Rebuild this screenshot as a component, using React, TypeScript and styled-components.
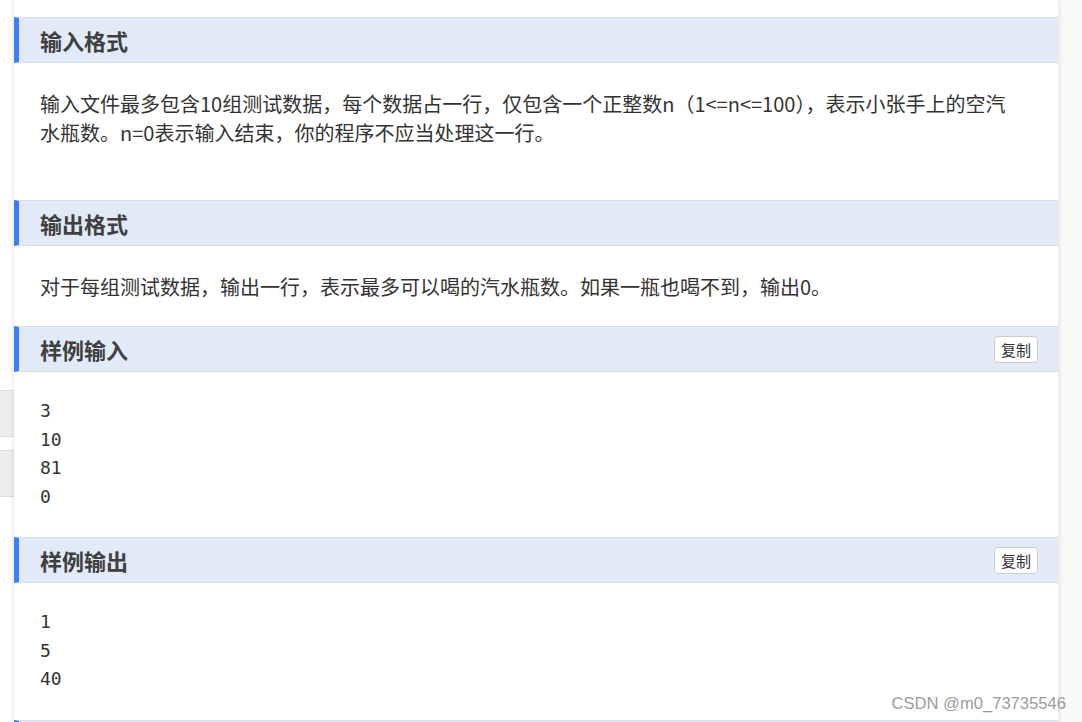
import React from "react";
import styled, { createGlobalStyle } from "styled-components";

const GlobalStyle = createGlobalStyle`
  html, body {
    margin: 0;
    padding: 0;
    background: #f8f8f8;
    font-family: "Noto Sans CJK SC", "Noto Sans", sans-serif;
    overflow: hidden;
  }
  * { box-sizing: border-box; }
`;

const Page = styled.div`
  display: flex;
  align-items: flex-start;
  width: 1082px;
  height: 722px;
  overflow: hidden;
  position: relative;
`;

const LeftRail = styled.div`
  width: 14px;
  flex: none;
  align-self: stretch;
  background: #ffffff;
  display: flex;
  flex-direction: column;
  gap: 13px;
  padding-top: 390px;
`;

const RailItem = styled.div`
  height: 47px;
  background: #eeeeee;
  border-top: 1px solid #dddddd;
  border-bottom: 1px solid #dddddd;
`;

const Card = styled.main`
  width: 1044px;
  flex: none;
  background: #ffffff;
  padding-top: 17px;
  box-shadow: 0 0 5px rgba(0, 0, 0, 0.14);
  position: relative;
  z-index: 1;
`;

const SectionHeader = styled.div`
  height: 46px;
  display: flex;
  align-items: center;
  justify-content: space-between;
  background: #e3eaf7;
  border-top: 1px solid #d9dde4;
  border-bottom: 1px solid #d9dde4;
  border-left: 5px solid #3d7cff;
  padding: 0 20px 0 21px;
`;

const Title = styled.h3`
  margin: 0;
  font-size: 22px;
  font-weight: 700;
  color: #404040;
  letter-spacing: 0;
`;

const CopyButton = styled.button`
  width: 44px;
  height: 27px;
  padding: 0;
  background: #ffffff;
  border: 1px solid #cccccc;
  border-radius: 4px;
  font-family: "Noto Sans CJK SC", sans-serif;
  font-size: 15px;
  color: #333333;
  line-height: 25px;
  cursor: pointer;
`;

const Body = styled.div<{ $extra?: boolean }>`
  padding: 26px 48px ${(p) => (p.$extra ? "53px" : "25px")} 26px;
  font-size: 20px;
  line-height: 29px;
  color: #333333;
`;

const Para = styled.p`
  margin: 0;
`;

const Sample = styled.pre`
  margin: 0;
  padding: 25px 26px 26px 26px;
  font-family: "DejaVu Sans Mono", "Liberation Mono", monospace;
  font-size: 18px;
  line-height: 28.5px;
  color: #333333;
`;

const Watermark = styled.div`
  position: absolute;
  right: 16px;
  bottom: 8px;
  z-index: 2;
  font-family: "Liberation Sans", Arial, sans-serif;
  font-size: 16.6px;
  color: #9c9c9c;
  pointer-events: none;
`;

type Section = {
  title: string;
  copy?: boolean;
  text?: string;
  extra?: boolean;
  sample?: string;
};

const sections: Section[] = [
  {
    title: "输入格式",
    text: "输入文件最多包含10组测试数据，每个数据占一行，仅包含一个正整数n（1<=n<=100），表示小张手上的空汽水瓶数。n=0表示输入结束，你的程序不应当处理这一行。",
    extra: true,
  },
  {
    title: "输出格式",
    text: "对于每组测试数据，输出一行，表示最多可以喝的汽水瓶数。如果一瓶也喝不到，输出0。",
  },
  { title: "样例输入", copy: true, sample: "3\n10\n81\n0" },
  { title: "样例输出", copy: true, sample: "1\n5\n40" },
];

export default function App() {
  return (
    <>
      <GlobalStyle />
      <Page>
        <LeftRail>
          <RailItem />
          <RailItem />
        </LeftRail>
        <Card>
          {sections.map((s) => (
            <section key={s.title}>
              <SectionHeader>
                <Title>{s.title}</Title>
                {s.copy && <CopyButton>复制</CopyButton>}
              </SectionHeader>
              {s.text !== undefined && (
                <Body $extra={s.extra}>
                  <Para>{s.text}</Para>
                </Body>
              )}
              {s.sample !== undefined && <Sample>{s.sample}</Sample>}
            </section>
          ))}
          <SectionHeader />
        </Card>
        <Watermark>CSDN @m0_73735546</Watermark>
      </Page>
    </>
  );
}
